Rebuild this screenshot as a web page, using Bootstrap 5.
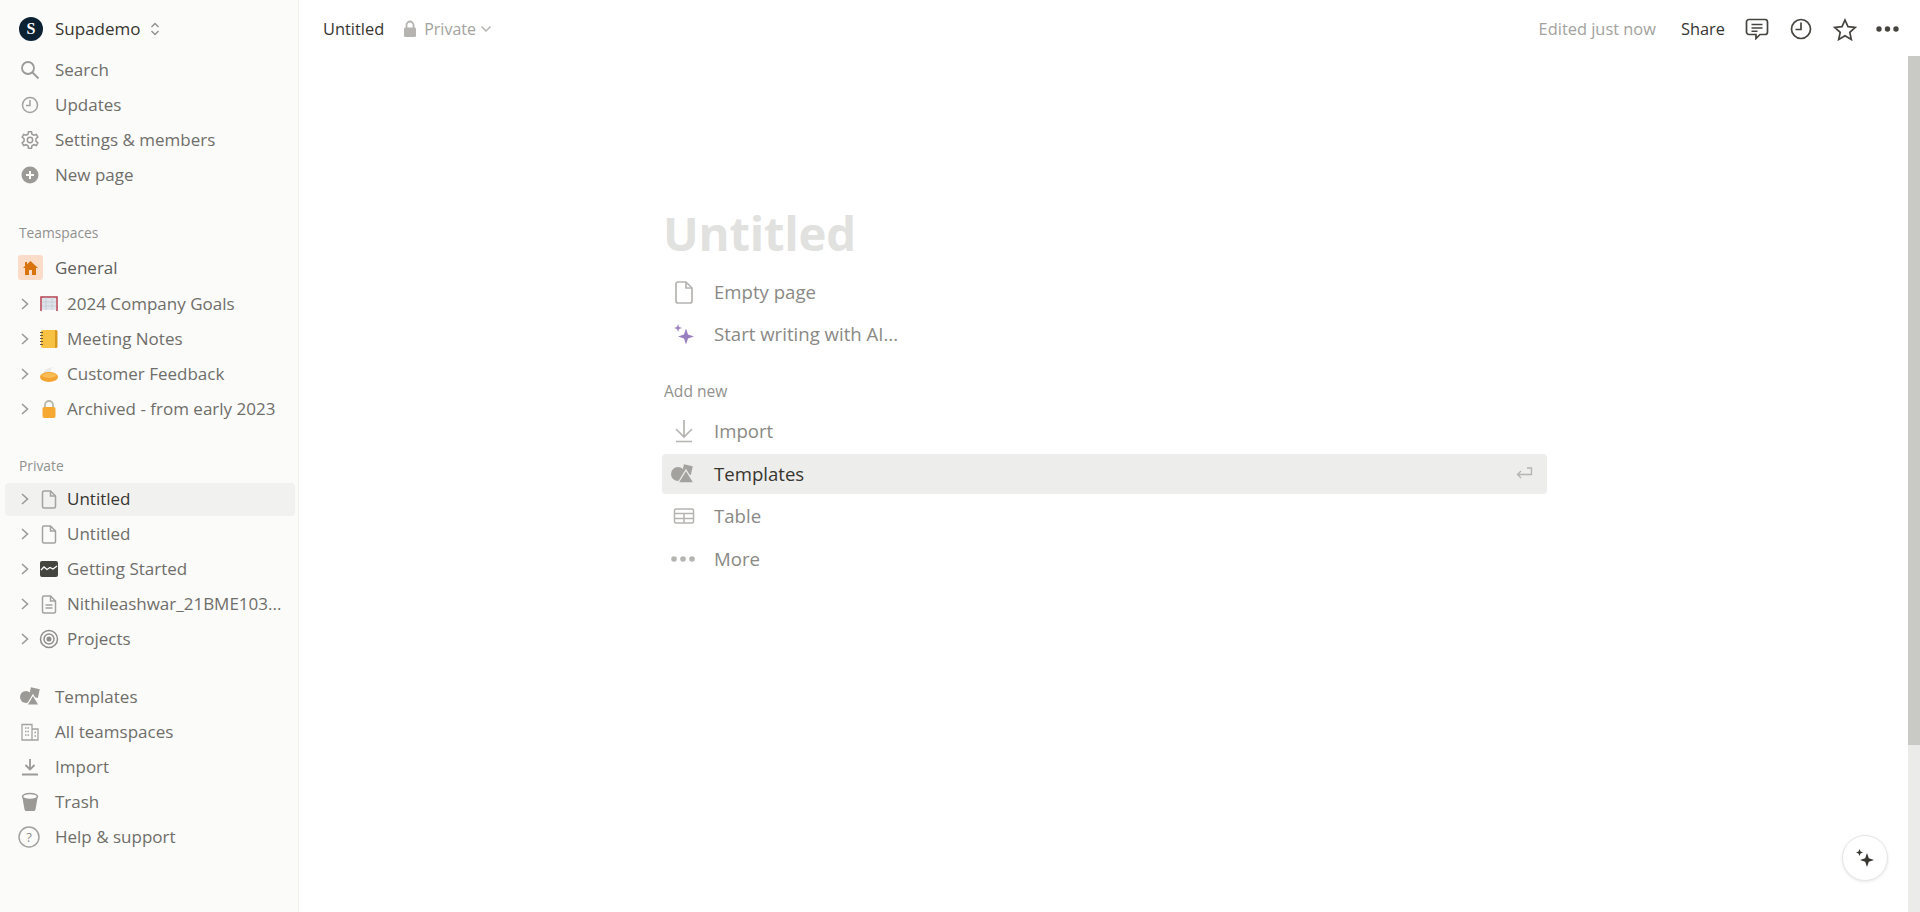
<!DOCTYPE html>
<html lang="en">
<head>
    <meta charset="UTF-8">
    <meta name="viewport" content="width=device-width, initial-scale=1.0">
    <title>Untitled</title>
    <link href="https://cdn.jsdelivr.net/npm/bootstrap@5.3.0/dist/css/bootstrap.min.css" rel="stylesheet">
    <style>
        html, body { height: 100%; overflow: hidden; }
        body { font-family: "Open Sans", "Noto Sans", sans-serif; color: #37352f; background: #fff; }
        .app-shell { height: 912px; }
        .side-bar { width: 299px; background: #fbfbfa; border-right: 1px solid #f3f3f1; padding: 12px 5px 0; flex-shrink: 0; }
        .side-row { height: 35px; font-size: 17px; color: #6f6e69; padding-left: 14px; white-space: nowrap; font-weight: 500; }
        .side-row .ico { width: 36px; flex-shrink: 0; display: flex; }
        .workspace { height: 34px; color: #37352f; margin-bottom: 6px; }
        .side-label { font-size: 13.8px; color: #91918e; padding-left: 14px; height: 21px; line-height: 21px; font-weight: 500; }
        .tree-row { padding-left: 15px; }
        .tree-row .caret-ico { width: 19px; flex-shrink: 0; display: flex; }
        .tree-row .ico { width: 28px; }
        .side-row.is-active { background: #f1f1ef; border-radius: 4px; color: #37352f; height: 33px; margin: 1px 0; width: 290px; }
        .teamspace-icon { width: 25px; height: 25px; background: #fbdcc8; border-radius: 3px; display: flex; align-items: center; justify-content: center; margin-left: -1px; }
        .top-bar { height: 58px; padding-left: 24px; padding-right: 9px; font-size: 16.4px; flex-shrink: 0; }
        .muted-top { color: #a3a29e; }
        .private-label { font-size: 16px; }
        .page-body { padding: 143px 0 0 363px; position: relative; }
        .page-title { font-size: 47.3px; font-weight: 700; color: #e1e1e0; line-height: 64px; margin: 0 0 0 1px; letter-spacing: -.2px; }
        .menu-row { height: 40px; width: 885px; font-size: 18.6px; color: #8a8985; padding-left: 11px; margin-bottom: 2.4px; border-radius: 4px; }
        .menu-row .ico { width: 41px; flex-shrink: 0; display: flex; }
        .menu-row.is-active { background: #ededec; color: #37352f; padding-right: 14px; }
        .menu-label { font-size: 15.6px; color: #91918e; padding-left: 2px; height: 20px; line-height: 20px; margin: 27px 0 10px; font-weight: 500; }
        .scroll-rail { width: 12px; flex-shrink: 0; padding-top: 56px; }
        .scroll-thumb { height: 689px; background: #c9c9c6; }
        .scroll-track { height: 167px; background: #ebebe9; }
        .ai-fab { position: absolute; right: 20px; bottom: 31px; width: 46px; height: 46px; background: #fff; border: 1px solid #e6e6e4; border-radius: 50%; box-shadow: 0 1px 3px rgba(15,15,15,.1); }
    </style>
</head>
<body>
<div class="app-shell d-flex">
    <nav class="side-bar d-flex flex-column">
        <div class="side-row workspace d-flex align-items-center">
            <span class="ico"><svg width="24" height="24" viewBox="0 0 24 24"><circle cx="12" cy="12" r="12" fill="#0c2233"/><text x="12" y="17" text-anchor="middle" font-family="Liberation Serif, serif" font-weight="700" font-size="16" fill="#fff">S</text></svg></span>
            <span>Supademo</span>
            <svg class="ms-2" width="12" height="16" viewBox="0 0 12 16" fill="none" stroke="#91918e" stroke-width="1.4"><path d="M2.5 6 6 2.5 9.5 6M2.5 10 6 13.5 9.5 10"/></svg>
        </div>
        <div class="side-row d-flex align-items-center"><span class="ico"><svg width="20" height="20" viewBox="0 0 20 20" fill="none" stroke="#9b9a97" stroke-width="1.8" transform="translate(1 0)"><circle cx="8" cy="8" r="6"/><path d="m12.5 12.5 6 6"/></svg></span>Search</div>
        <div class="side-row d-flex align-items-center"><span class="ico"><svg width="20" height="20" viewBox="0 0 20 20" fill="none" stroke="#a3a29e" stroke-width="1.5" transform="translate(1 0)"><circle cx="10" cy="10" r="7.5"/><path d="M10 5v5.5H6"/></svg></span>Updates</div>
        <div class="side-row d-flex align-items-center"><span class="ico"><svg width="20" height="20" viewBox="0 0 24 24" fill="none" stroke="#9b9a97" stroke-width="1.8" transform="translate(1 0)"><circle cx="12" cy="12" r="3.2"/><path d="M10.2 2h3.6l.6 3 2.3 1.3 2.9-1 1.8 3.2-2.3 2v2.9l2.3 2-1.8 3.2-2.9-1-2.3 1.3-.6 3h-3.6l-.6-3-2.3-1.3-2.9 1-1.8-3.2 2.3-2v-2.9l-2.3-2 1.8-3.2 2.9 1 2.3-1.3z"/></svg></span>Settings &amp; members</div>
        <div class="side-row d-flex align-items-center"><span class="ico"><svg width="20" height="20" viewBox="0 0 20 20" transform="translate(1 0)"><circle cx="10" cy="10" r="8.5" fill="#9b9a97"/><path d="M10 6v8M6 10h8" stroke="#fbfbfa" stroke-width="2"/></svg></span>New page</div>

        <div class="side-label" style="margin-top:30px">Teamspaces</div>
        <div class="side-row d-flex align-items-center" style="margin:7px 0 1px;color:#5f5e5a"><span class="ico"><span class="teamspace-icon"><svg width="15" height="14" viewBox="0 0 15 14"><path d="M7.5 0 15 7h-2v7H9V9H6v5H2V7H0l2-2V1h2v2.200z" fill="#d9730d"/></svg></span></span>General</div>
        <div class="side-row tree-row d-flex align-items-center"><span class="caret-ico"><svg width="10" height="14" viewBox="0 0 10 14" fill="none" stroke="#9b9a97" stroke-width="1.6"><path d="m2 2 5.500 5L2 12"/></svg></span><span class="ico"><svg width="20" height="18" viewBox="0 0 20 18"><path d="M3 2h14v13H3z" fill="#dfe4ea"/><path d="M2 16V2h16v14" fill="none" stroke="#b5404f" stroke-width="1.500"/><path d="M7 2v13M13 2v13M3 7h14M3 11h14" stroke="#bcc3cc" stroke-width=".6"/></svg></span>2024 Company Goals</div>
        <div class="side-row tree-row d-flex align-items-center"><span class="caret-ico"><svg width="10" height="14" viewBox="0 0 10 14" fill="none" stroke="#9b9a97" stroke-width="1.6"><path d="m2 2 5.500 5L2 12"/></svg></span><span class="ico"><svg width="20" height="20" viewBox="0 0 20 20"><rect x="2" y="1" width="16" height="18" rx="2" fill="#f7c244"/><path d="M16 1h1a1.500 1.500 0 0 1 1.500 1.500v15A1.500 1.500 0 0 1 17 19h-1z" fill="#d89a22"/><path d="M1 3.500h3M1 6.500h3M1 9.500h3M1 12.500h3M1 15.500h3" stroke="#6b5a3a" stroke-width="1.200"/></svg></span>Meeting Notes</div>
        <div class="side-row tree-row d-flex align-items-center"><span class="caret-ico"><svg width="10" height="14" viewBox="0 0 10 14" fill="none" stroke="#9b9a97" stroke-width="1.6"><path d="m2 2 5.500 5L2 12"/></svg></span><span class="ico"><svg width="20" height="20" viewBox="0 0 20 20"><path d="M4 9c1-3 5-5 10-6-2 2-3 4-2 5z" fill="#e9e9e7"/><ellipse cx="10" cy="13" rx="9" ry="5" fill="#f3a32f"/><ellipse cx="10" cy="11.500" rx="7" ry="2.500" fill="#f8bd54"/></svg></span>Customer Feedback</div>
        <div class="side-row tree-row d-flex align-items-center"><span class="caret-ico"><svg width="10" height="14" viewBox="0 0 10 14" fill="none" stroke="#9b9a97" stroke-width="1.6"><path d="m2 2 5.500 5L2 12"/></svg></span><span class="ico"><svg width="20" height="20" viewBox="0 0 20 20"><path d="M6 9V6a4 4 0 0 1 8 0v3" fill="none" stroke="#b8b6ad" stroke-width="1.800"/><rect x="3.500" y="8" width="13" height="11" rx="2" fill="#f5a832"/></svg></span>Archived - from early 2023</div>

        <div class="side-label" style="margin-top:28.500px">Private</div>
        <div class="side-row tree-row is-active d-flex align-items-center" style="margin-top:7px"><span class="caret-ico"><svg width="10" height="14" viewBox="0 0 10 14" fill="none" stroke="#9b9a97" stroke-width="1.6"><path d="m2 2 5.500 5L2 12"/></svg></span><span class="ico"><svg width="20" height="20" viewBox="0 0 20 20" fill="none" stroke="#a3a29e" stroke-width="1.500"><path d="M3.500 3.500A1.500 1.500 0 0 1 5 2h6.500l5 5v10.500a1.500 1.500 0 0 1-1.500 1.500H5a1.500 1.500 0 0 1-1.500-1.500z"/><path d="M11.500 2v5h5"/></svg></span>Untitled</div>
        <div class="side-row tree-row d-flex align-items-center"><span class="caret-ico"><svg width="10" height="14" viewBox="0 0 10 14" fill="none" stroke="#9b9a97" stroke-width="1.6"><path d="m2 2 5.500 5L2 12"/></svg></span><span class="ico"><svg width="20" height="20" viewBox="0 0 20 20" fill="none" stroke="#a3a29e" stroke-width="1.500"><path d="M3.500 3.500A1.500 1.500 0 0 1 5 2h6.500l5 5v10.500a1.500 1.500 0 0 1-1.500 1.500H5a1.500 1.500 0 0 1-1.500-1.500z"/><path d="M11.500 2v5h5"/></svg></span>Untitled</div>
        <div class="side-row tree-row d-flex align-items-center"><span class="caret-ico"><svg width="10" height="14" viewBox="0 0 10 14" fill="none" stroke="#9b9a97" stroke-width="1.6"><path d="m2 2 5.500 5L2 12"/></svg></span><span class="ico"><svg width="20" height="18" viewBox="0 0 20 18"><rect x="1" y="1" width="18" height="16" rx="2" fill="#45453f"/><path d="m2 10 3-3 3 2.500 3-2 3 1.500 4-3" fill="none" stroke="#fff" stroke-width="1.300"/></svg></span>Getting Started</div>
        <div class="side-row tree-row d-flex align-items-center"><span class="caret-ico"><svg width="10" height="14" viewBox="0 0 10 14" fill="none" stroke="#9b9a97" stroke-width="1.6"><path d="m2 2 5.500 5L2 12"/></svg></span><span class="ico"><svg width="20" height="20" viewBox="0 0 20 20" fill="none" stroke="#a3a29e" stroke-width="1.500"><path d="M3.500 3.500A1.500 1.500 0 0 1 5 2h6.500l5 5v10.500a1.500 1.500 0 0 1-1.500 1.500H5a1.500 1.500 0 0 1-1.500-1.500z"/><path d="M11.500 2v5h5M6.500 11h7M6.500 14h7"/></svg></span><span class="text-truncate">Nithileashwar_21BME103...</span></div>
        <div class="side-row tree-row d-flex align-items-center"><span class="caret-ico"><svg width="10" height="14" viewBox="0 0 10 14" fill="none" stroke="#9b9a97" stroke-width="1.6"><path d="m2 2 5.500 5L2 12"/></svg></span><span class="ico"><svg width="20" height="20" viewBox="0 0 20 20" fill="none" stroke="#8f8e8a" stroke-width="1.500"><circle cx="10" cy="10" r="8.500"/><circle cx="10" cy="10" r="5"/><circle cx="10" cy="10" r="1.800" fill="#8f8e8a"/></svg></span>Projects</div>

        <div class="side-row d-flex align-items-center" style="margin-top:23px"><span class="ico"><svg width="22" height="20" viewBox="0 0 22 20"><circle cx="7" cy="10" r="6" fill="#9b9a97"/><rect x="11" y="1" width="9" height="9" fill="#9b9a97" transform="rotate(12 15 5)"/><path d="m14 8 6 10H8z" fill="#9b9a97" stroke="#fbfbfa" stroke-width="1.200"/></svg></span>Templates</div>
        <div class="side-row d-flex align-items-center"><span class="ico"><svg width="20" height="20" viewBox="0 0 20 20" fill="none" stroke="#a3a29e" stroke-width="1.300" transform="translate(1 0)"><path d="M2 2.500h10V18H2zM12 7h6v11h-6M5 6h1.500M7.500 6H9M5 9.500h1.500M7.500 9.500H9M5 13h1.500M7.500 13H9M14.500 10.500H16M14.500 14H16"/></svg></span>All teamspaces</div>
        <div class="side-row d-flex align-items-center"><span class="ico"><svg width="20" height="20" viewBox="0 0 20 20" fill="none" stroke="#9b9a97" stroke-width="1.800" transform="translate(1 0)"><path d="M10 2v10M5.500 8 10 12.500 14.500 8M2 17.500h16"/></svg></span>Import</div>
        <div class="side-row d-flex align-items-center"><span class="ico"><svg width="20" height="20" viewBox="0 0 20 20" transform="translate(1 0)"><path d="M2.500 6h15l-2 11.500a2 2 0 0 1-2 1.500h-7a2 2 0 0 1-2-1.500z" fill="#9b9a97"/><ellipse cx="10" cy="4.500" rx="7.500" ry="3" fill="#fbfbfa" stroke="#9b9a97" stroke-width="1.500"/></svg></span>Trash</div>
        <div class="side-row d-flex align-items-center"><span class="ico"><svg width="22" height="22" viewBox="0 0 22 22" style="margin-left:-1px"><circle cx="11" cy="11" r="10" fill="none" stroke="#a3a29e" stroke-width="1.500"/><text x="11" y="15.500" text-anchor="middle" font-family="Open Sans, sans-serif" font-size="13" fill="#8f8e8a">?</text></svg></span>Help &amp; support</div>
    </nav>

    <main class="flex-grow-1 d-flex flex-column position-relative">
        <header class="top-bar d-flex align-items-center">
            <span>Untitled</span>
            <svg style="margin-left:19px" width="14" height="18" viewBox="0 0 14 18"><path d="M3.500 8V5a3.500 3.500 0 0 1 7 0v3" fill="none" stroke="#b5b4b1" stroke-width="1.800"/><rect x="1" y="7.500" width="12" height="9.500" rx="1.500" fill="#b5b4b1"/></svg>
            <span class="muted-top private-label" style="margin-left:7px">Private</span>
            <svg class="ms-1" width="12" height="8" viewBox="0 0 12 8" fill="none" stroke="#b5b4b1" stroke-width="1.500"><path d="m1.500 1.500 4.500 4.500 4.500-4.500"/></svg>
            <span class="muted-top ms-auto" style="margin-right:25px">Edited just now</span>
            <span style="margin-right:20px">Share</span>
            <svg width="24" height="22" viewBox="0 0 24 22" fill="none" stroke="#45443f" stroke-width="1.700" style="margin-right:21px"><path d="M4 1.500h16a2.500 2.500 0 0 1 2.500 2.500v10a2.500 2.500 0 0 1-2.500 2.500h-5L11 20.500v-4H4A2.500 2.500 0 0 1 1.500 14V4A2.500 2.500 0 0 1 4 1.500z"/><path d="M6.500 6.500h11M6.500 10h11M6.500 13.200h6" stroke-width="1.400"/></svg>
            <svg width="22" height="22" viewBox="0 0 22 22" fill="none" stroke="#45443f" stroke-width="1.700" style="margin-right:21px"><circle cx="11" cy="11" r="9.500"/><path d="M11 4.500V11.500H5.500"/></svg>
            <svg width="24" height="23" viewBox="0 0 24 23" fill="none" stroke="#45443f" stroke-width="1.700" style="margin-right:19px"><path d="m12 2 3 6.700 7.200.8-5.400 4.800 1.500 7.200L12 17.800l-6.300 3.700 1.500-7.200L1.800 9.500 9 8.700z"/></svg>
            <svg width="23" height="6" viewBox="0 0 23 6" fill="#45443f"><circle cx="3" cy="3" r="2.700"/><circle cx="11.500" cy="3" r="2.700"/><circle cx="20" cy="3" r="2.700"/></svg>
        </header>
        <div class="page-body flex-grow-1">
            <h1 class="page-title">Untitled</h1>
            <div class="menu-row d-flex align-items-center" style="margin-top:7px"><span class="ico"><svg width="22" height="24" viewBox="0 0 22 24" fill="none" stroke="#b5b4b1" stroke-width="1.700"><path d="M3 4a2 2 0 0 1 2-2h8l6 6v13a2 2 0 0 1-2 2H5a2 2 0 0 1-2-2z"/><path d="M13 2v6h6"/></svg></span>Empty page</div>
            <div class="menu-row d-flex align-items-center"><span class="ico"><svg width="22" height="22" viewBox="0 0 22 22" fill="#9a7fc0"><path d="M13 5.500 15 11.500 21 13.500 15 15.500 13 21.500 11 15.500 5 13.500 11 11.500z"/><path d="M5 1 6 4 9 5 6 6 5 9 4 6 1 5 4 4z"/></svg></span>Start writing with AI...</div>
            <div class="menu-label">Add new</div>
            <div class="menu-row d-flex align-items-center"><span class="ico"><svg width="22" height="24" viewBox="0 0 22 24" fill="none" stroke="#b5b4b1" stroke-width="1.700"><path d="M11 1v16M3 10l8 8 8-8M3 22.500h16"/></svg></span>Import</div>
            <div class="menu-row is-active d-flex align-items-center"><span class="ico"><svg width="26" height="22" viewBox="0 0 26 22" style="margin-left:-3px"><circle cx="8" cy="11" r="7" fill="#a3a29e"/><rect x="13" y="2" width="9" height="9" fill="#a3a29e" transform="rotate(12 17 6)"/><path d="m16 7 8 13H8z" fill="#a3a29e" stroke="#ededec" stroke-width="1.300"/></svg></span>Templates<svg class="ms-auto" width="18" height="15" viewBox="0 0 18 15" fill="none" stroke="#b5b4b1" stroke-width="1.300"><path d="M12 2h4.500v6.500H2.500M6 5 2.500 8.500 6 12"/></svg></div>
            <div class="menu-row d-flex align-items-center"><span class="ico"><svg width="22" height="20" viewBox="0 0 22 20" fill="none" stroke="#b5b4b1" stroke-width="1.500"><rect x="1.500" y="3" width="19" height="14" rx="1.500"/><path d="M1.500 7.500h19M1.500 12.500h19M11 7.500V17"/></svg></span>Table</div>
            <div class="menu-row d-flex align-items-center"><span class="ico"><svg width="26" height="6" viewBox="0 0 26 6" fill="#b5b4b1" style="margin:auto 0 auto -3px"><circle cx="4" cy="3" r="2.800"/><circle cx="13" cy="3" r="2.800"/><circle cx="22" cy="3" r="2.800"/></svg></span>More</div>
            <div class="ai-fab d-flex align-items-center justify-content-center"><svg width="20" height="20" viewBox="0 0 20 20" fill="#37352f"><path d="M12 5 13.800 10.200 19 12 13.800 13.800 12 19 10.200 13.800 5 12 10.200 10.200z"/><path d="M4.500 1 5.500 3.500 8 4.500 5.500 5.500 4.500 8 3.500 5.500 1 4.500 3.500 3.500z"/></svg></div>
        </div>
    </main>
    <div class="scroll-rail">
        <div class="scroll-thumb"></div>
        <div class="scroll-track"></div>
    </div>
</div>
<script src="https://cdn.jsdelivr.net/npm/bootstrap@5.3.0/dist/js/bootstrap.bundle.min.js"></script>
</body>
</html>
